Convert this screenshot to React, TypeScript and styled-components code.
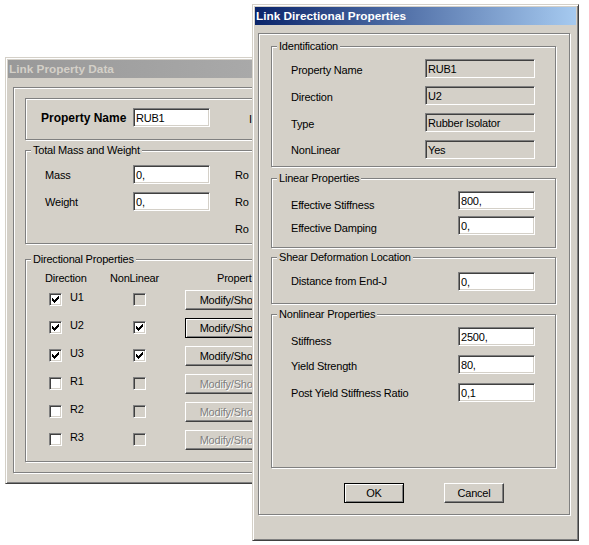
import React from "react";
import styled, { createGlobalStyle } from "styled-components";

const face = "#d4d0c8";
const shadow = "#808080";
const dark = "#404040";

const GlobalStyle = createGlobalStyle`
  html, body {
    margin: 0;
    padding: 0;
    background: #fff;
  }
  body {
    font-family: "Liberation Sans", Arial, sans-serif;
    font-size: 11px;
    letter-spacing: -0.2px;
    color: #000;
  }
`;

const Desktop = styled.div`
  position: relative;
  width: 589px;
  height: 545px;
  overflow: hidden;
  background: #fff;
`;

const Window = styled.div<{ $left: number; $top: number; $width: number; $height: number }>`
  position: absolute;
  left: ${({ $left }) => $left}px;
  top: ${({ $top }) => $top}px;
  width: ${({ $width }) => $width}px;
  height: ${({ $height }) => $height}px;
  box-sizing: border-box;
  padding: 2px;
  background: ${face};
  border: 1px solid;
  border-color: ${face} ${dark} ${dark} ${face};
  box-shadow: inset 1px 1px 0 #fff, inset -1px -1px 0 ${shadow};
  display: flex;
  flex-direction: column;
  overflow: hidden;
`;

const TitleBar = styled.div<{ $active?: boolean }>`
  flex: none;
  height: 18px;
  padding-left: 1px;
  display: flex;
  align-items: center;
  font-size: 11.8px;
  font-weight: bold;
  letter-spacing: 0;
  white-space: nowrap;
  color: ${({ $active }) => ($active ? "#fff" : face)};
  background: ${({ $active }) =>
    $active
      ? "linear-gradient(to right, #0a246a, #a6caf0)"
      : "linear-gradient(to right, #999999, #b8b8b8)"};
`;

const Frame = styled.div<{ $ml: number; $mt: number; $w: number; $h: number; $pl: number; $pt: number }>`
  flex: none;
  box-sizing: border-box;
  margin: ${({ $mt }) => $mt}px 0 0 ${({ $ml }) => $ml}px;
  width: ${({ $w }) => $w}px;
  height: ${({ $h }) => $h}px;
  padding: ${({ $pt }) => $pt}px 0 0 ${({ $pl }) => $pl}px;
  border: 1px solid ${shadow};
  box-shadow: inset 1px 1px 0 #fff, 1px 1px 0 #fff;
  display: flex;
  flex-direction: column;
`;

const Group = styled.div<{ $w: number; $mt?: number; $pad: string }>`
  position: relative;
  flex: none;
  box-sizing: border-box;
  width: ${({ $w }) => $w}px;
  margin-top: ${({ $mt = 0 }) => $mt}px;
  padding: ${({ $pad }) => $pad};
  border: 1px solid ${shadow};
  box-shadow: inset 1px 1px 0 #fff, 1px 1px 0 #fff;
`;

const Caption = styled.span`
  position: absolute;
  top: -7px;
  left: 5px;
  padding: 0 2px;
  line-height: 13px;
  background: ${face};
  white-space: nowrap;
`;

const Row = styled.div<{ $mt?: number; $h?: number }>`
  display: flex;
  align-items: flex-start;
  height: ${({ $h = 19 }) => $h}px;
  margin-top: ${({ $mt = 0 }) => $mt}px;
`;

const Label = styled.span<{ $w?: number; $dy?: number; $ml?: number; $bold?: boolean }>`
  flex: none;
  width: ${({ $w }) => ($w ? `${$w}px` : "auto")};
  margin-top: ${({ $dy = 3 }) => $dy}px;
  margin-left: ${({ $ml = 0 }) => $ml}px;
  line-height: 13px;
  white-space: nowrap;
  ${({ $bold }) =>
    $bold ? "font-weight: bold; font-size: 12px; letter-spacing: 0; line-height: 14px;" : ""}
`;

const TextBox = styled.div<{ $w: number; $ro?: boolean }>`
  flex: none;
  box-sizing: border-box;
  width: ${({ $w }) => $w}px;
  height: 19px;
  padding: 0 0 0 2px;
  display: flex;
  align-items: center;
  white-space: nowrap;
  overflow: hidden;
  background: ${({ $ro }) => ($ro ? face : "#fff")};
  border: 1px solid;
  border-color: ${shadow} #fff #fff ${shadow};
  box-shadow: inset 1px 1px 0 ${dark}, inset -1px -1px 0 ${face};
`;

const WinButton = styled.button<{ $w: number; $h: number; $default?: boolean }>`
  flex: none;
  box-sizing: border-box;
  width: ${({ $w }) => $w}px;
  height: ${({ $h }) => $h}px;
  margin: 0;
  padding: 0;
  font-family: inherit;
  font-size: 11px;
  letter-spacing: inherit;
  white-space: nowrap;
  overflow: hidden;
  color: #000;
  background: ${face};
  border: 1px solid;
  border-color: ${({ $default }) => ($default ? "#000" : `#fff ${dark} ${dark} #fff`)};
  box-shadow: ${({ $default }) =>
    $default ? `inset 1px 1px 0 #fff, inset -1px -1px 0 ${shadow}` : `inset -1px -1px 0 ${shadow}`};

  &:disabled {
    color: ${shadow};
    text-shadow: 1px 1px 0 #fff;
  }
`;

const CheckBoxFace = styled.span<{ $off?: boolean; $ml?: number; $mt?: number }>`
  flex: none;
  box-sizing: border-box;
  width: 13px;
  height: 13px;
  margin: ${({ $mt = 0 }) => $mt}px 0 0 ${({ $ml = 0 }) => $ml}px;
  padding: 2px;
  display: block;
  background: ${({ $off }) => ($off ? face : "#fff")};
  border: 1px solid;
  border-color: ${shadow} #fff #fff ${shadow};
  box-shadow: inset 1px 1px 0 ${dark}, inset -1px -1px 0 ${face};

  svg {
    display: block;
  }
`;

const ButtonRow = styled.div`
  display: flex;
  gap: 40px;
  margin-top: 15px;
  padding-left: 73px;
`;

const DirGrid = styled.div<{ $mt?: number }>`
  display: grid;
  grid-template-columns: 65px 75px auto;
  grid-auto-rows: 20px;
  row-gap: 8px;
  margin-top: ${({ $mt = 0 }) => $mt}px;
`;

const HeaderCell = styled.span<{ $pl?: number }>`
  padding-left: ${({ $pl = 0 }) => $pl}px;
  line-height: 13px;
  white-space: nowrap;
  align-self: start;
`;

const Cell = styled.div`
  display: flex;
  align-items: flex-start;
  white-space: nowrap;
`;

const MassGrid = styled.div`
  display: grid;
  grid-template-columns: 88px 77px auto;
  grid-auto-rows: 19px;
  row-gap: 8px;
`;

const CheckBox: React.FC<{ checked?: boolean; off?: boolean; ml?: number; mt?: number }> = ({
  checked,
  off,
  ml,
  mt,
}) => (
  <CheckBoxFace $off={off} $ml={ml} $mt={mt}>
    {checked && (
      <svg width="7" height="7" viewBox="0 0 7 7" shapeRendering="crispEdges">
        <path
          fill="#000"
          d="M0 2h1v3H0z M1 3h1v3H1z M2 4h1v3H2z M3 3h1v3H3z M4 2h1v3H4z M5 1h1v3H5z M6 0h1v3H6z"
        />
      </svg>
    )}
  </CheckBoxFace>
);

const directions = [
  { dof: "U1", on: true, nl: false, nlOn: false, focus: false },
  { dof: "U2", on: true, nl: true, nlOn: true, focus: true },
  { dof: "U3", on: true, nl: true, nlOn: true, focus: false },
  { dof: "R1", on: false, nl: false, nlOn: false, focus: false },
  { dof: "R2", on: false, nl: false, nlOn: false, focus: false },
  { dof: "R3", on: false, nl: false, nlOn: false, focus: false },
];

const identRows = [
  { label: "Property Name", value: "RUB1", dy: 5 },
  { label: "Direction", value: "U2", dy: 5 },
  { label: "Type", value: "Rubber Isolator", dy: 5 },
  { label: "NonLinear", value: "Yes", dy: 4 },
];

// only the part of the back dialog left of the front one is visible
const LinkPropertyData = () => (
  <Window $left={5} $top={57} $width={480} $height={427}>
    <TitleBar>Link Property Data</TitleBar>
    <Frame $ml={5} $mt={9} $w={460} $h={386} $pl={11} $pt={10}>
      <Group $w={430} $pad="9px 0 12px 15px">
        <Row>
          <Label $w={92} $dy={3} $bold>
            Property Name
          </Label>
          <TextBox $w={77}>RUB1</TextBox>
          <Label $dy={5} $ml={39}>
            I
          </Label>
        </Row>
      </Group>

      <Group $w={430} $mt={10} $pad="14px 0 5px 19px">
        <Caption>Total Mass and Weight</Caption>
        <MassGrid>
          <Label $dy={4}>Mass</Label>
          <TextBox $w={77}>0,</TextBox>
          <Label $dy={4} $ml={25}>
            Ro
          </Label>
          <Label $dy={4}>Weight</Label>
          <TextBox $w={77}>0,</TextBox>
          <Label $dy={4} $ml={25}>
            Ro
          </Label>
          <span />
          <span />
          <Label $dy={4} $ml={25}>
            Ro
          </Label>
        </MassGrid>
      </Group>

      <Group $w={430} $mt={15} $pad="12px 0 11px 19px">
        <Caption>Directional Properties</Caption>
        <DirGrid>
          <HeaderCell>Direction</HeaderCell>
          <HeaderCell>NonLinear</HeaderCell>
          <HeaderCell $pl={32}>Propert</HeaderCell>
        </DirGrid>
        <DirGrid $mt={-2}>
          {directions.map((d) => (
            <React.Fragment key={d.dof}>
              <Cell>
                <CheckBox checked={d.on} ml={4} mt={3} />
                <Label $dy={1} $ml={8}>
                  {d.dof}
                </Label>
              </Cell>
              <Cell>
                <CheckBox checked={d.nl} off={!d.nlOn} ml={23} mt={3} />
              </Cell>
              <Cell>
                <WinButton $w={98} $h={20} $default={d.focus} disabled={!d.on}>
                  Modify/Show...
                </WinButton>
              </Cell>
            </React.Fragment>
          ))}
        </DirGrid>
      </Group>
    </Frame>
  </Window>
);

const LinkDirectionalProperties = () => (
  <Window $left={252} $top={4} $width={327} $height={537}>
    <TitleBar $active>Link Directional Properties</TitleBar>
    <Frame $ml={3} $mt={8} $w={312} $h={482} $pl={12} $pt={12}>
      <Group $w={285} $pad="12px 0 7px 19px">
        <Caption>Identification</Caption>
        {identRows.map((r, i) => (
          <Row key={r.label} $mt={i === 0 ? 0 : 8}>
            <Label $w={134} $dy={r.dy}>
              {r.label}
            </Label>
            <TextBox $w={110} $ro>
              {r.value}
            </TextBox>
          </Row>
        ))}
      </Group>

      <Group $w={285} $mt={11} $pad="12px 0 12px 19px">
        <Caption>Linear Properties</Caption>
        <Row>
          <Label $w={167} $dy={8}>
            Effective Stiffness
          </Label>
          <TextBox $w={77}>800,</TextBox>
        </Row>
        <Row $mt={6}>
          <Label $w={167} $dy={6}>
            Effective Damping
          </Label>
          <TextBox $w={77}>0,</TextBox>
        </Row>
      </Group>

      <Group $w={285} $mt={9} $pad="14px 0 12px 19px">
        <Caption>Shear Deformation Location</Caption>
        <Row>
          <Label $w={167} $dy={3}>
            Distance from End-J
          </Label>
          <TextBox $w={77}>0,</TextBox>
        </Row>
      </Group>

      <Group $w={285} $mt={10} $pad="12px 0 65px 19px">
        <Caption>Nonlinear Properties</Caption>
        <Row>
          <Label $w={167} $dy={8}>
            Stiffness
          </Label>
          <TextBox $w={77}>2500,</TextBox>
        </Row>
        <Row $mt={9}>
          <Label $w={167} $dy={5}>
            Yield Strength
          </Label>
          <TextBox $w={77}>80,</TextBox>
        </Row>
        <Row $mt={9}>
          <Label $w={167} $dy={4}>
            Post Yield Stiffness Ratio
          </Label>
          <TextBox $w={77}>0,1</TextBox>
        </Row>
      </Group>

      <ButtonRow>
        <WinButton $w={60} $h={20} $default>
          OK
        </WinButton>
        <WinButton $w={60} $h={20}>
          Cancel
        </WinButton>
      </ButtonRow>
    </Frame>
  </Window>
);

export default function App() {
  return (
    <>
      <GlobalStyle />
      <Desktop>
        <LinkPropertyData />
        <LinkDirectionalProperties />
      </Desktop>
    </>
  );
}
